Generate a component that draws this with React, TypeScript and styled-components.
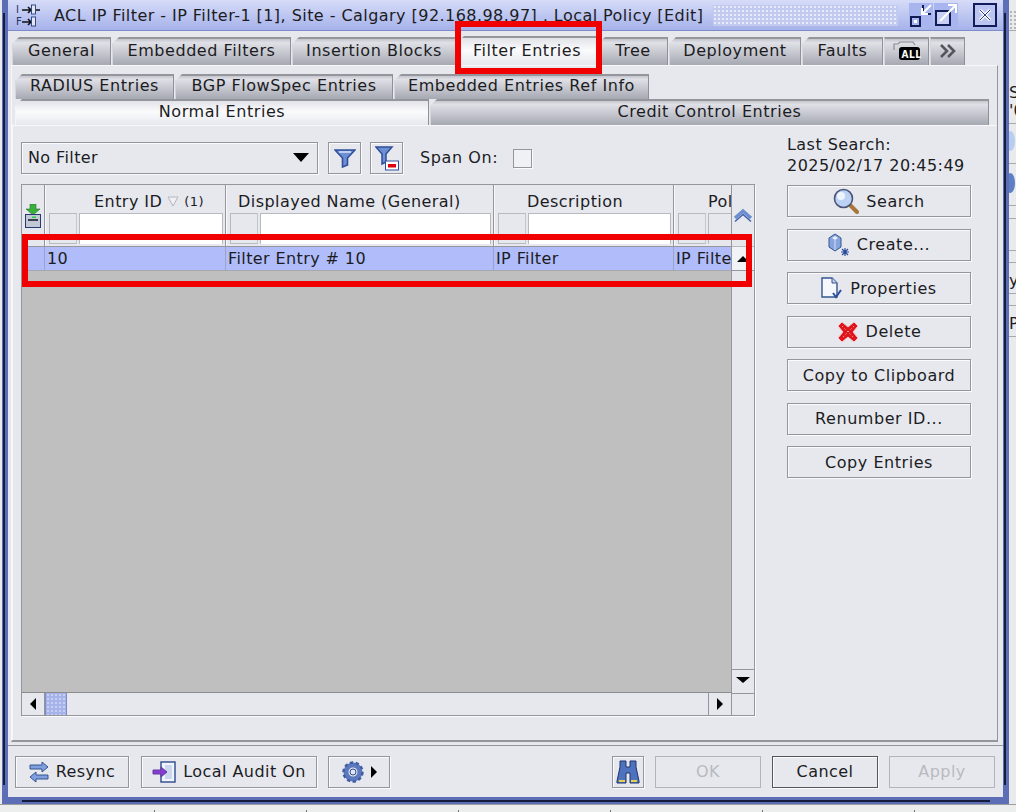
import React from 'react';
import styled, { createGlobalStyle } from 'styled-components';

const GlobalStyle = createGlobalStyle`
  html, body {
    margin: 0;
    padding: 0;
    background: #e9eaec;
  }
  * {
    box-sizing: border-box;
  }
`;

const BG = '#e6e8ee';

const Page = styled.div`
  position: relative;
  width: 1016px;
  height: 812px;
  overflow: hidden;
  display: flex;
  flex-direction: column;
  font-family: 'DejaVu Sans', sans-serif;
  font-size: 16px;
  color: #1c1c1f;
`;

const Desk = styled.div`
  display: flex;
  height: 804px;
`;

const Window = styled.div`
  position: relative;
  width: 1007px;
  margin-left: 2px;
  height: 804px;
  background: #5c6fb6;
  padding: 0 6px 7px 6px;
  display: flex;
  flex-direction: column;

  /* dark inner line of the window frame */
  &::before {
    content: '';
    position: absolute;
    left: 1px;
    right: 3px;
    top: 13px;
    height: 772px;
    border-left: 2px solid #161c3c;
    border-right: 2px solid #161c3c;
  }

  &::after {
    content: '';
    position: absolute;
    left: 20px;
    width: 968px;
    top: 800px;
    height: 2px;
    background: #161c3c;
  }
`;

const SideStrip = styled.div`
  width: 7px;
  overflow: hidden;
  white-space: nowrap;
  background: #e9eaec;
  display: flex;
  flex-direction: column;
`;

const StripDots = styled.div`
  height: 20px;
  margin-top: 10px;
  background-image: radial-gradient(#b4b6bc 1px, transparent 1.2px);
  background-size: 4px 4px;
`;

const StripRow = styled.div<{ $h: number }>`
  height: ${p => p.$h}px;
  flex: none;
  border-top: 1px solid #a8a9ae;
  display: flex;
  flex-direction: column;
  justify-content: flex-end;
  line-height: 18px;
  padding-bottom: 3px;
`;

const StripDot = styled.span<{ $color: string }>`
  width: 9px;
  height: 20px;
  margin: 0 0 9px -3px;
  border-radius: 50%;
  background: ${p => p.$color};
`;

const TitleBar = styled.div`
  height: 31px;
  display: flex;
  align-items: center;
  padding: 0 6px 0 7px;
  background: linear-gradient(#d6dcf8, #a6b2ea);
  border-bottom: 1px solid #7c8cc8;
`;

const TitleText = styled.div`
  margin-left: 13px;
  white-space: nowrap;
  letter-spacing: 0.45px;
`;

const TitleDots = styled.div`
  flex: 1;
  height: 21px;
  margin: 0 10px 0 9px;
  background-color: #c3caf0;
  background-image: radial-gradient(#e9ebfa 1px, transparent 1.2px);
  background-size: 4px 4px;
`;

const WinIcon = styled.div<{ $gap?: number }>`
  width: 24px;
  height: 24px;
  margin-left: ${p => p.$gap ?? 1}px;
  display: flex;
`;

const Body = styled.div`
  flex: 1;
  min-height: 0;
  background: ${BG};
  display: flex;
  flex-direction: column;
`;

const MainTabs = styled.div`
  display: flex;
  height: 34px;
  padding: 6px 0 0 4px;
  gap: 1px;
`;

const Tab = styled.div<{ $w: number; $active?: boolean; $flush?: boolean }>`
  width: ${p => p.$w}px;
  height: ${p => (p.$active ? 29 : 28)}px;
  margin-top: ${p => (p.$active ? -1 : 0)}px;
  padding-bottom: 3px;
  display: flex;
  align-items: center;
  justify-content: center;
  gap: 6px;
  white-space: nowrap;
  letter-spacing: 0.55px;
  background: ${p =>
    p.$active
      ? 'linear-gradient(#e2e3e8, #fbfbfd 45%, #e6e8ee)'
      : 'linear-gradient(#c4c5cd, #e0e1e7 14%, #a6a8b2)'};
  border-top: 2px solid #94969c;
  border-left: 1px solid ${p => (p.$active ? '#f4f5f8' : '#d6d7dc')};
  border-right: 1px solid #8f9198;
  clip-path: ${p => (p.$flush ? 'none' : 'polygon(7px 0, 100% 0, 100% 100%, 0 100%, 0 7px)')};
`;

const OuterPanel = styled.div`
  flex: 1;
  margin: 0 5px 0 3px;
  border-top: 1px solid #f8f8fa;
  border-bottom: 2px solid #94969c;
  border-right: 1px solid #94969c;
  border-left: 1px solid #f8f8fa;
  display: flex;
  flex-direction: column;
`;

const SubTabs = styled.div`
  display: flex;
  height: 25px;
  margin-top: 8px;
  padding-left: 3px;
  gap: 1px;
`;

const SubTab = styled(Tab)`
  height: 25px;
  margin-top: 0;
  padding-bottom: 5px;
`;

const LowerTabs = styled.div`
  display: flex;
  height: 26px;
  padding-left: 3px;
  gap: 1px;
`;

const LowerTab = styled(Tab)`
  height: 26px;
  margin-top: 0;
`;

const InnerPanel = styled.div`
  flex: 1;
  display: flex;
  gap: 32px;
  padding: 16px 0 0 8px;
  border-left: 1px solid #f8f8fa;
  border-top: 1px solid #f8f8fa;
`;

const LeftColumn = styled.div`
  width: 734px;
  display: flex;
  flex-direction: column;
  gap: 10px;
`;

const FilterRow = styled.div`
  height: 32px;
  display: flex;
  align-items: center;
`;

const Combo = styled.div`
  width: 297px;
  height: 32px;
  display: flex;
  align-items: center;
  justify-content: space-between;
  padding: 0 8px 1px 6px;
  border: 1px solid #94969c;
  box-shadow: 1px 1px 0 #fbfbfd, inset 1px 1px 0 #fbfbfd;
  letter-spacing: 0.4px;
`;

const ComboArrow = styled.span`
  width: 0;
  height: 0;
  border-left: 8px solid transparent;
  border-right: 8px solid transparent;
  border-top: 9px solid #000;
`;

const SquareButton = styled.div<{ $gap: number }>`
  width: 33px;
  height: 32px;
  margin-left: ${p => p.$gap}px;
  display: flex;
  align-items: center;
  justify-content: center;
  border: 1px solid #94969c;
  box-shadow: 1px 1px 0 #fbfbfd, inset 1px 1px 0 #fbfbfd;
`;

const SpanLabel = styled.span`
  margin-left: 17px;
  letter-spacing: 0.6px;
  padding-bottom: 1px;
`;

const CheckBox = styled.span`
  width: 19px;
  height: 19px;
  margin-left: 15px;
  border: 1px solid #94969c;
  background: #f0f1f5;
  box-shadow: 1px 1px 0 #fbfbfd;
`;

const TableFrame = styled.div`
  width: 734px;
  height: 532px;
  border: 1px solid #94969c;
  box-shadow: 1px 1px 0 #fbfbfd;
  display: grid;
  grid-template-columns: 709px 23px;
  grid-template-rows: 508px 1fr;
`;

const TableArea = styled.div`
  display: flex;
  flex-direction: column;
  background: #bfbfbf;
  border-bottom: 1px solid #8c8c8c;
  overflow: hidden;
`;

const HeaderRow = styled.div`
  display: grid;
  grid-template-columns: 23px 181px 268px 180px 58px;
  height: 62px;
  background: ${BG};
  border-bottom: 1px solid #94969c;
`;

const ExportCell = styled.div`
  display: flex;
  align-items: flex-end;
  justify-content: center;
  padding-bottom: 18px;
  border-right: 1px solid #94969c;
`;

const HeaderCell = styled.div`
  display: flex;
  flex-direction: column;
  border-right: 1px solid #94969c;
  border-left: 1px solid #f8f8fa;
  overflow: hidden;
`;

const HeaderLabel = styled.div<{ $pad: number }>`
  height: 28px;
  padding: 4px 0 0 ${p => p.$pad}px;
  display: flex;
  align-items: center;
  white-space: nowrap;
  letter-spacing: 0.45px;
  gap: 5px;
`;

const SortNote = styled.span`
  font-size: 13px;
`;

const FilterCells = styled.div`
  display: flex;
  gap: 2px;
  padding: 0 2px 0 3px;
`;

const OpCell = styled.div`
  width: 28px;
  height: 31px;
  flex: none;
  background: #e6e8ee;
  border: 1px solid #b8b9be;
  border-right-color: #c6c7cc;
`;

const TextCell = styled.div<{ $blank?: boolean }>`
  flex: 1;
  min-width: 27px;
  height: 31px;
  background: ${p => (p.$blank ? '#e6e8ee' : '#fff')};
  border: 1px solid #b8b9be;
  border-bottom: none;
`;

const DataRow = styled.div`
  display: grid;
  grid-template-columns: 23px 181px 268px 180px 58px;
  height: 24px;
  background: #b1bdfa;
  border-bottom: 1px solid #a8a9ae;
`;

const DataCell = styled.div`
  padding: 0 0 0 2px;
  line-height: 23px;
  white-space: nowrap;
  overflow: hidden;
  letter-spacing: 0.4px;
  border-right: 1px solid #9ea3c8;
`;

const VBar = styled.div`
  display: flex;
  flex-direction: column;
  border-left: 1px solid #94969c;
`;

const VTop = styled.div`
  height: 62px;
  display: flex;
  align-items: flex-end;
  justify-content: center;
  padding-bottom: 23px;
  border-bottom: 1px solid #b8b9be;
`;

const ArrowBtn = styled.div`
  height: 24px;
  display: flex;
  align-items: center;
  justify-content: center;
  background: #f2f3f6;
  border-bottom: 1px solid #94969c;
`;

const VTrack = styled.div`
  flex: 1;
`;

const DownBtn = styled(ArrowBtn)`
  background: ${BG};
  border-top: 1px solid #94969c;
  border-bottom: none;
  padding-bottom: 3px;
`;

const Up = styled.span`
  width: 0;
  height: 0;
  border-left: 6px solid transparent;
  border-right: 6px solid transparent;
  border-bottom: 6px solid #000;
`;

const Down = styled.span`
  width: 0;
  height: 0;
  border-left: 7px solid transparent;
  border-right: 7px solid transparent;
  border-top: 6px solid #000;
`;

const HBar = styled.div`
  display: flex;
  align-items: stretch;
`;

const HBtn = styled.div`
  width: 23px;
  display: flex;
  align-items: center;
  justify-content: center;
  border-right: 1px solid #94969c;
`;

const HBtnEnd = styled(HBtn)`
  border-left: 1px solid #94969c;
  border-right: none;
`;

const HThumb = styled.div`
  width: 22px;
  background-color: #a6b2ea;
  background-image: radial-gradient(#c9cff3 1px, transparent 1.2px);
  background-size: 4px 4px;
  border-left: 1px solid #7c8cc8;
  border-right: 1px solid #7c8cc8;
`;

const HTrack = styled.div`
  flex: 1;
`;

const Left = styled.span`
  width: 0;
  height: 0;
  border-top: 6px solid transparent;
  border-bottom: 6px solid transparent;
  border-right: 6px solid #000;
`;

const Right = styled.span`
  width: 0;
  height: 0;
  border-top: 6px solid transparent;
  border-bottom: 6px solid transparent;
  border-left: 6px solid #000;
`;

const Corner = styled.div`
  border-left: 1px solid #94969c;
  border-top: 1px solid #94969c;
`;

const RightColumn = styled.div`
  width: 184px;
  margin-top: -8px;
  display: flex;
  flex-direction: column;
`;

const SearchInfo = styled.div`
  height: 51px;
  line-height: 21px;
  letter-spacing: 0.45px;
  white-space: nowrap;
`;

const SideButtons = styled.div`
  display: flex;
  flex-direction: column;
  gap: 11.5px;
`;

const SideButton = styled.div`
  height: 32px;
  display: flex;
  align-items: center;
  justify-content: center;
  gap: 7px;
  letter-spacing: 0.55px;
  border: 1px solid #94969c;
  box-shadow: 1px 1px 0 #fbfbfd, inset 1px 1px 0 #fbfbfd;
  white-space: nowrap;
`;

const Footer = styled.div`
  height: 52px;
  margin-top: 3px;
  display: flex;
  align-items: center;
  padding: 0 8px 0 7px;
  border-top: 1px solid #94969c;
`;

const FootButton = styled.div<{ $w: number; $gap?: number; $off?: boolean; $strong?: boolean }>`
  width: ${p => p.$w}px;
  height: 32px;
  margin-left: ${p => p.$gap ?? 0}px;
  display: flex;
  align-items: center;
  justify-content: center;
  gap: 7px;
  letter-spacing: 0.45px;
  color: ${p => (p.$off ? '#b9babf' : 'inherit')};
  border: 1px solid ${p => (p.$off ? '#b4b5ba' : p.$strong ? '#55565a' : '#94969c')};
  box-shadow: ${p => (p.$off ? 'none' : '1px 1px 0 #fbfbfd, inset 1px 1px 0 #fbfbfd')};
  white-space: nowrap;
`;

const FootSpacer = styled.div`
  flex: 1;
`;

const BottomStrip = styled.div`
  flex: 1;
  background: #eceded;
  border-top: 1px solid #9c9da2;
  display: flex;
  padding-left: 154px;
  gap: 151px;
`;

const Tick = styled.span`
  width: 1px;
  height: 3px;
  background: #77787c;
  margin-top: 5px;
`;

const RedBox = styled.div<{ $x: number; $y: number; $w: number; $h: number }>`
  position: absolute;
  left: ${p => p.$x}px;
  top: ${p => p.$y}px;
  width: ${p => p.$w}px;
  height: ${p => p.$h}px;
  border: 6px solid #f00000;
  pointer-events: none;
`;

const FilterTitleIcon = () => (
  <svg width="26" height="24" viewBox="0 0 26 24">
    <text x="1" y="10" fontSize="10" fontFamily="DejaVu Sans" fill="#23345f">I</text>
    <text x="1" y="22" fontSize="10" fontFamily="DejaVu Sans" fill="#23345f">F</text>
    <path d="M7 7h9M13 4l3 3-3 3M7 19h9M13 16l3 3-3 3M20 7h5" stroke="#111" strokeWidth="1.6" fill="none" />
    <rect x="16.5" y="2" width="4" height="9" fill="#e6e8ee" stroke="#2d4a8e" />
    <rect x="16.5" y="14" width="4" height="9" fill="#e6e8ee" stroke="#2d4a8e" />
  </svg>
);

const ShrinkIcon = () => (
  <svg width="24" height="24" viewBox="0 0 24 24">
    <rect width="24" height="24" fill="#a9b5ee" />
    <path d="M2 14h9v9H2zM14 2v9h8" fill="none" stroke="#111c58" strokeWidth="2" />
    <rect x="5" y="17" width="3" height="3" fill="#fff" />
    <path d="M22 2 13 11M13 5v6h6" fill="none" stroke="#fff" strokeWidth="2" />
  </svg>
);

const GrowIcon = () => (
  <svg width="24" height="24" viewBox="0 0 24 24">
    <rect width="24" height="24" fill="#a9b5ee" />
    <rect x="2" y="8" width="14" height="14" fill="#c8cff4" stroke="#111c58" strokeWidth="2" />
    <path d="M6 18 22 2M14 2h8v8" fill="none" stroke="#fff" strokeWidth="2" />
  </svg>
);

const CloseIcon = () => (
  <svg width="24" height="24" viewBox="0 0 24 24">
    <rect x="1" y="1" width="22" height="22" fill="#bcc5f2" stroke="#111c58" strokeWidth="2" />
    <path d="M7 7 17 17M17 7 7 17" stroke="#fff" strokeWidth="3" />
    <path d="M7 7 17 17M17 7 7 17" stroke="#2a3a86" strokeWidth="1" />
  </svg>
);

const AllIcon = () => (
  <svg width="28" height="20" viewBox="0 0 28 20">
    <path d="M1 9V3h4l2-2h13l2 3" fill="none" stroke="#8a8c94" strokeWidth="1.2" />
    <rect x="6" y="6" width="21" height="13" rx="3" fill="#000" />
    <text x="8.5" y="16.5" fontSize="10" fontWeight="700" fontFamily="DejaVu Sans Condensed" fill="#fff">ALL</text>
  </svg>
);

const ChevronsIcon = () => (
  <svg width="18" height="14" viewBox="0 0 18 14">
    <path d="M2 1l6 6-6 6M9 1l6 6-6 6" fill="none" stroke="#55565c" strokeWidth="2.6" />
  </svg>
);

const FunnelIcon = () => (
  <svg width="22" height="20" viewBox="0 0 22 20">
    <path d="M1 2h20l-7.5 8v7l-5 2v-9z" fill="#6f8fd3" stroke="#2f4f9a" strokeWidth="1.6" />
    <path d="M5 4h12" stroke="#dbe5fa" strokeWidth="1.5" />
  </svg>
);

const FunnelClearIcon = () => (
  <svg width="24" height="26" viewBox="0 0 24 26">
    <path d="M1 2h16l-6 7v8l-4 2V9z" fill="#6f8fd3" stroke="#2f4f9a" strokeWidth="1.5" />
    <rect x="10.5" y="16" width="13" height="9" fill="#fff" stroke="#2f4f9a" />
    <rect x="13" y="19" width="8" height="3.5" fill="#e00010" />
  </svg>
);

const ExportIcon = () => (
  <svg width="16" height="24" viewBox="0 0 16 24">
    <path d="M5 0h6v5h4l-7 6-7-6h4z" fill="#38b03c" stroke="#2c6e32" strokeWidth="0.6" />
    <rect x="0.5" y="10.5" width="15" height="13" fill="#c3c9d4" stroke="#253a72" />
    <rect x="3" y="15" width="10" height="2" fill="#3a4252" />
    <rect x="7" y="12.5" width="4" height="1.5" fill="#22d040" />
  </svg>
);

const UpChevronIcon = () => (
  <svg width="20" height="15" viewBox="0 0 20 15">
    <path d="M2 10 10 3l8 7" fill="none" stroke="#6c8fd0" strokeWidth="3.4" />
    <path d="M2 13.5 10 6.5l8 7" fill="none" stroke="#3f5fa8" strokeWidth="1.4" />
  </svg>
);

const SearchIcon = () => (
  <svg width="26" height="26" viewBox="0 0 26 26">
    <path d="M16 16l8 8" stroke="#a8763a" strokeWidth="4" strokeLinecap="round" />
    <circle cx="10.5" cy="10.5" r="9" fill="#bcd2f2" stroke="#4a5578" strokeWidth="1.6" />
    <circle cx="8" cy="8" r="4" fill="#eef4fd" />
  </svg>
);

const CreateIcon = () => (
  <svg width="22" height="24" viewBox="0 0 22 24">
    <path d="M7 1l6 4v9l-6 4-6-4V5z" fill="#86a4de" stroke="#34558f" />
    <path d="M4 5l3-2 3 2-3 2z" fill="#e8eefa" />
    <path d="M7 7v10" stroke="#d6e0f6" />
    <path d="M17 15v8M13 19h8M14 16l6 6M20 16l-6 6" stroke="#2b4e9e" strokeWidth="1.2" />
  </svg>
);

const PropertiesIcon = () => (
  <svg width="22" height="22" viewBox="0 0 22 22">
    <path d="M1 1h10l5 5v14H1z" fill="#f6f7fc" stroke="#34558f" strokeWidth="1.4" />
    <path d="M11 1v5h5" fill="#c3d0ef" stroke="#34558f" />
    <path d="M12 16l3 4 5-7" fill="none" stroke="#2b4e9e" strokeWidth="2" />
  </svg>
);

const DeleteIcon = () => (
  <svg width="22" height="22" viewBox="0 0 22 22">
    <path d="M5 1l6 5 6-5 4 4-5 6 5 6-4 4-6-5-6 5-4-4 5-6-5-6z" fill="#e0141c" stroke="#f7c4c4" strokeWidth="1" />
    <path d="M5 5l12 12M17 5 5 17" stroke="#f4a0a0" strokeWidth="1" strokeDasharray="1.5 2" />
  </svg>
);

const ResyncIcon = () => (
  <svg width="20" height="22" viewBox="0 0 20 22">
    <path d="M1 4h12V1l6 5-6 5V8H1z" fill="#7f9fde" stroke="#34558f" />
    <path d="M19 14H7v-3l-6 5 6 5v-3h12z" fill="#7f9fde" stroke="#34558f" />
  </svg>
);

const AuditIcon = () => (
  <svg width="24" height="22" viewBox="0 0 24 22">
    <rect x="9" y="1" width="14" height="20" fill="#f2f4fb" stroke="#2b4a8c" strokeWidth="1.4" />
    <rect x="13" y="4" width="7" height="14" fill="#cdd6ef" />
    <path d="M1 9h8V6l6 5-6 5v-3H1z" fill="#8a3ad0" stroke="#5a3ea0" />
  </svg>
);

const GearIcon = () => (
  <svg width="22" height="22" viewBox="0 0 22 22">
    <circle cx="11" cy="11" r="7" fill="none" stroke="#5d79bd" strokeWidth="5" />
    <circle cx="11" cy="11" r="9.5" fill="none" stroke="#3f5ca6" strokeWidth="2.4" strokeDasharray="3.4 2.5" />
    <circle cx="11" cy="11" r="3" fill="#dfe5f6" stroke="#2e4a90" />
  </svg>
);

const BinocularsIcon = () => (
  <svg width="24" height="24" viewBox="0 0 24 24">
    <path d="M4 1h6v6h4V1h6v6l3 14v2h-9V13h-4v10H1v-2L4 7z" fill="#4f72bd" stroke="#1f3470" />
    <rect x="3" y="20" width="6" height="2" fill="#e6d44a" />
    <rect x="15" y="20" width="6" height="2" fill="#e6d44a" />
  </svg>
);

const App: React.FC = () => {
  return (
    <Page>
      <GlobalStyle />
      <Desk>
        <Window>
          <TitleBar>
            <FilterTitleIcon />
            <TitleText>ACL IP Filter - IP Filter-1 [1], Site - Calgary [92.168.98.97] , Local Policy [Edit]</TitleText>
            <TitleDots />
            <WinIcon><ShrinkIcon /></WinIcon>
            <WinIcon><GrowIcon /></WinIcon>
            <WinIcon $gap={15}><CloseIcon /></WinIcon>
          </TitleBar>
          <Body>
            <MainTabs>
              <Tab $w={99}>General</Tab>
              <Tab $w={179}>Embedded Filters</Tab>
              <Tab $w={164}>Insertion Blocks</Tab>
              <Tab $w={140} $active>Filter Entries</Tab>
              <Tab $w={70}>Tree</Tab>
              <Tab $w={132}>Deployment</Tab>
              <Tab $w={81}>Faults</Tab>
              <Tab $w={45} $flush><AllIcon /></Tab>
              <Tab $w={35} $flush><ChevronsIcon /></Tab>
            </MainTabs>
            <OuterPanel>
              <SubTabs>
                <SubTab $w={159}>RADIUS Entries</SubTab>
                <SubTab $w={218}>BGP FlowSpec Entries</SubTab>
                <SubTab $w={255}>Embedded Entries Ref Info</SubTab>
              </SubTabs>
              <LowerTabs>
                <LowerTab $w={414} $active>Normal Entries</LowerTab>
                <LowerTab $w={559}>Credit Control Entries</LowerTab>
              </LowerTabs>
              <InnerPanel>
                <LeftColumn>
                  <FilterRow>
                    <Combo>No Filter<ComboArrow /></Combo>
                    <SquareButton $gap={10}><FunnelIcon /></SquareButton>
                    <SquareButton $gap={9}><FunnelClearIcon /></SquareButton>
                    <SpanLabel>Span On:</SpanLabel>
                    <CheckBox />
                  </FilterRow>
                  <TableFrame>
                    <TableArea>
                      <HeaderRow>
                        <ExportCell><ExportIcon /></ExportCell>
                        <HeaderCell>
                          <HeaderLabel $pad={48}>
                            Entry ID
                            <svg width="12" height="11" viewBox="0 0 12 11">
                              <path d="M1 1h10L6 10z" fill="#eef0f5" stroke="#b4b6bc" />
                            </svg>
                            <SortNote>(1)</SortNote>
                          </HeaderLabel>
                          <FilterCells><OpCell /><TextCell /></FilterCells>
                        </HeaderCell>
                        <HeaderCell>
                          <HeaderLabel $pad={11}>Displayed Name (General)</HeaderLabel>
                          <FilterCells><OpCell /><TextCell /></FilterCells>
                        </HeaderCell>
                        <HeaderCell>
                          <HeaderLabel $pad={32}>Description</HeaderLabel>
                          <FilterCells><OpCell /><TextCell /></FilterCells>
                        </HeaderCell>
                        <HeaderCell>
                          <HeaderLabel $pad={33}>Pol</HeaderLabel>
                          <FilterCells><OpCell /><TextCell $blank /></FilterCells>
                        </HeaderCell>
                      </HeaderRow>
                      <DataRow>
                        <DataCell />
                        <DataCell>10</DataCell>
                        <DataCell>Filter Entry # 10</DataCell>
                        <DataCell>IP Filter</DataCell>
                        <DataCell>IP Filter</DataCell>
                      </DataRow>
                    </TableArea>
                    <VBar>
                      <VTop><UpChevronIcon /></VTop>
                      <ArrowBtn><Up /></ArrowBtn>
                      <VTrack />
                      <DownBtn><Down /></DownBtn>
                    </VBar>
                    <HBar>
                      <HBtn><Left /></HBtn>
                      <HThumb />
                      <HTrack />
                      <HBtnEnd><Right /></HBtnEnd>
                    </HBar>
                    <Corner />
                  </TableFrame>
                </LeftColumn>
                <RightColumn>
                  <SearchInfo>Last Search:<br />2025/02/17 20:45:49</SearchInfo>
                  <SideButtons>
                    <SideButton><SearchIcon />Search</SideButton>
                    <SideButton><CreateIcon />Create...</SideButton>
                    <SideButton><PropertiesIcon />Properties</SideButton>
                    <SideButton><DeleteIcon />Delete</SideButton>
                    <SideButton>Copy to Clipboard</SideButton>
                    <SideButton>Renumber ID...</SideButton>
                    <SideButton>Copy Entries</SideButton>
                  </SideButtons>
                </RightColumn>
              </InnerPanel>
            </OuterPanel>
            <Footer>
              <FootButton $w={114}><ResyncIcon />Resync</FootButton>
              <FootButton $w={176} $gap={12}><AuditIcon />Local Audit On</FootButton>
              <FootButton $w={62} $gap={11}><GearIcon /><Right /></FootButton>
              <FootSpacer />
              <FootButton $w={32}><BinocularsIcon /></FootButton>
              <FootButton $w={106} $gap={11} $off>OK</FootButton>
              <FootButton $w={106} $gap={11} $strong>Cancel</FootButton>
              <FootButton $w={106} $gap={11} $off>Apply</FootButton>
            </Footer>
          </Body>
        </Window>
        <SideStrip>
          <StripDots />
          <StripRow $h={93}><span>S</span><span>'0</span></StripRow>
          <StripRow $h={40}><StripDot $color="#b9cdf0" /></StripRow>
          <StripRow $h={42}><StripDot $color="#5f7fc4" /></StripRow>
          <StripRow $h={13} />
          <StripRow $h={32} />
          <StripRow $h={12} />
          <StripRow $h={31}><span>y</span></StripRow>
          <StripRow $h={12} />
          <StripRow $h={31}><span>P</span></StripRow>
          <StripRow $h={1} />
        </SideStrip>
      </Desk>
      <BottomStrip>
        <Tick /><Tick /><Tick /><Tick /><Tick /><Tick />
      </BottomStrip>
      <RedBox $x={455} $y={21} $w={147} $h={53} />
      <RedBox $x={22} $y={234} $w={730} $h={53} />
    </Page>
  );
};

export default App;
